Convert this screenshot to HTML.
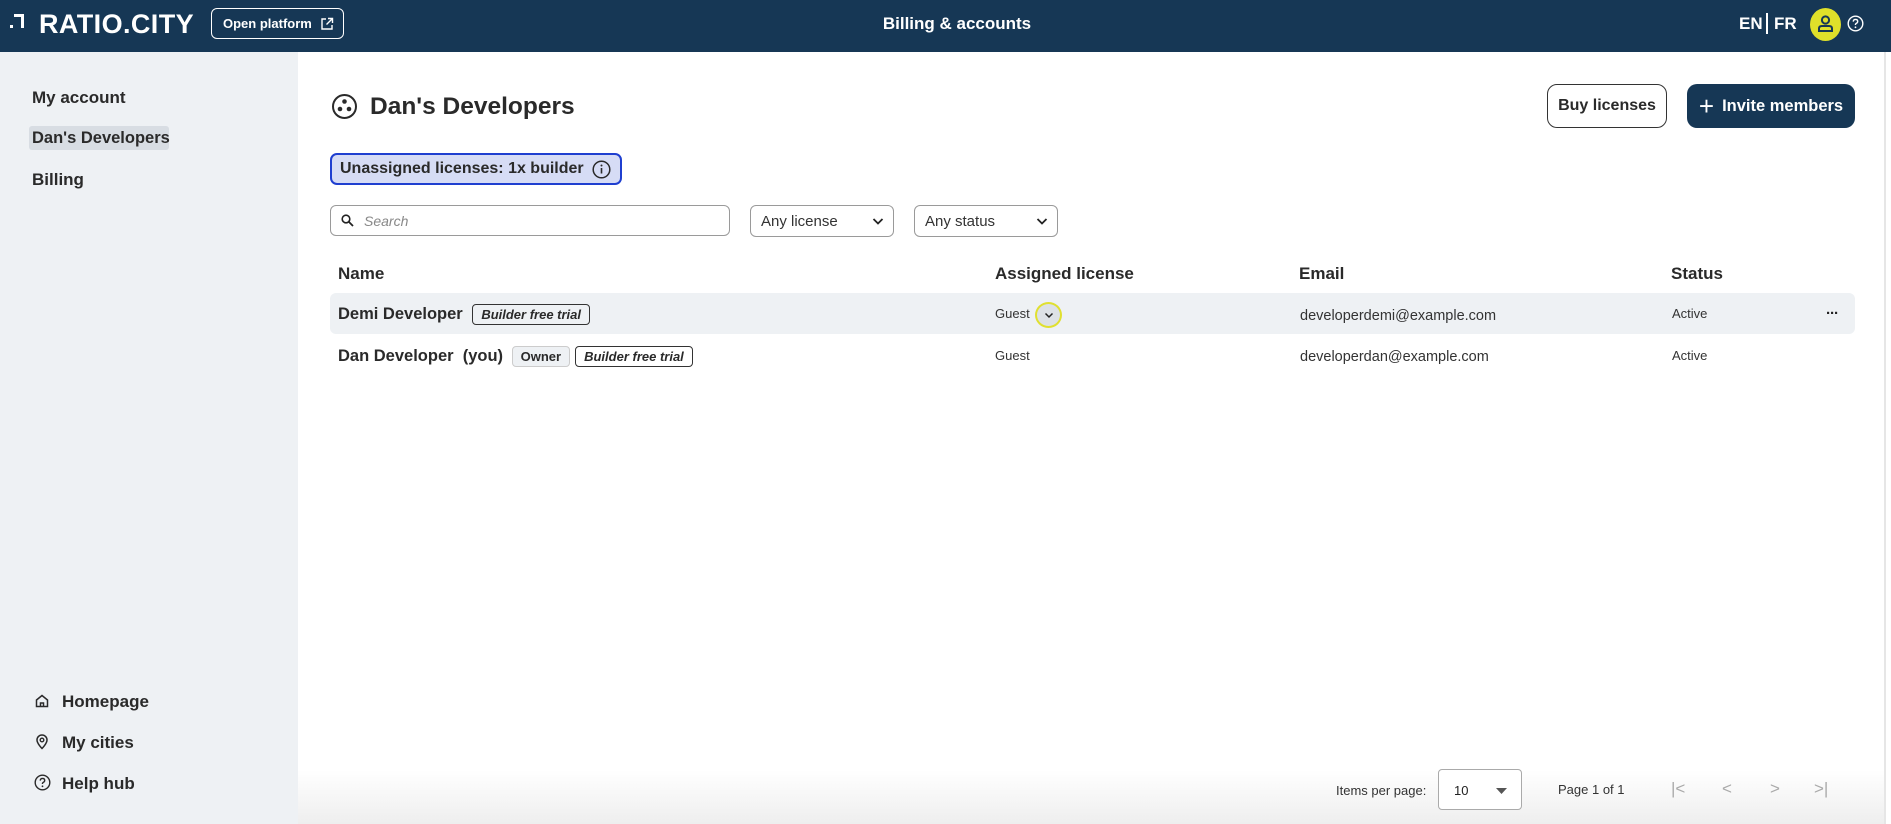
<!DOCTYPE html>
<html><head><meta charset="utf-8"><style>
*{box-sizing:border-box;margin:0;padding:0}
body{width:1891px;height:824px;overflow:hidden;font-family:"Liberation Sans",sans-serif;color:#222;background:#fff;position:relative}
.abs{position:absolute}
.top{left:0;top:0;width:1891px;height:52px;background:#163755;color:#fff}
.side{left:0;top:52px;width:298px;height:772px;background:#eef1f4}
.nav{font-size:17px;font-weight:bold;color:#2a2a2a}
.btn{border-radius:10px;font-weight:bold;font-size:17px;display:flex;align-items:center;justify-content:center}
.sel{border:1px solid #9a9a9a;border-radius:6px;font-size:15px;display:flex;align-items:center;padding-left:10px;color:#333}
.th{top:263px;font-size:17px;font-weight:bold;color:#2a2a2a}
.tag{display:inline-block;border:1px solid #333;border-radius:4px;font-size:13px;font-style:italic;font-weight:bold;padding:2px 8px;vertical-align:middle;margin-left:5px}
.cell{font-size:13px;color:#333}
</style></head><body>
<div class="abs top">
  <div class="abs" style="left:10px;top:14px;width:14px;height:14px"><div class="abs" style="left:0;top:11px;width:3px;height:3px;background:#fff"></div><div class="abs" style="left:4px;top:0;width:10px;height:14px;border-top:3px solid #fff;border-right:3px solid #fff"></div></div>
  <div class="abs" style="left:39px;top:9px;font-size:27px;font-weight:bold;letter-spacing:0.4px">RATIO.CITY</div>
  <div class="abs" style="left:211px;top:8px;width:133px;height:31px;border:1px solid #fff;border-radius:6px;font-size:13px;font-weight:bold;display:flex;align-items:center;padding-left:11px">Open platform
    <svg width="14" height="14" viewBox="0 0 14 14" style="margin-left:8px"><path d="M6 2H2v10h10V8M8 1.5h4.5V6M12.5 1.5L6.5 7.5" fill="none" stroke="#fff" stroke-width="1.4"/></svg></div>
  <div class="abs" style="left:857px;width:200px;top:14px;text-align:center;font-size:17px;font-weight:bold">Billing &amp; accounts</div>
  <div class="abs" style="left:1739px;top:14px;font-size:17px;font-weight:bold">EN</div>
  <div class="abs" style="left:1766px;top:13px;width:2px;height:21px;background:#fff"></div>
  <div class="abs" style="left:1774px;top:14px;font-size:17px;font-weight:bold">FR</div>
  <div class="abs" style="left:1810px;top:8px;width:31px;height:33px;border-radius:50%;background:#dfe02a">
    <svg width="31" height="33" viewBox="0 0 31 33"><circle cx="15.5" cy="12" r="3.6" fill="none" stroke="#163755" stroke-width="2"/><path d="M9 23v-2.5q0-2.5 3-2.5h7q3 0 3 2.5V23z" fill="none" stroke="#163755" stroke-width="2"/></svg></div>
  <svg class="abs" style="left:1847px;top:15px" width="17" height="17" viewBox="0 0 17 17"><circle cx="8.5" cy="8.5" r="7.3" fill="none" stroke="#fff" stroke-width="1.4"/><path d="M6.3 6.6q0-2.2 2.2-2.2t2.2 2q0 1.4-1.6 2.1-.7.4-.7 1.5" fill="none" stroke="#fff" stroke-width="1.4"/><circle cx="8.5" cy="12.3" r=".9" fill="#fff"/></svg>
</div>
<div class="abs side"></div>
<div class="abs nav" style="left:32px;top:88px">My account</div>
<div class="abs" style="left:29px;top:126px;width:140px;height:24px;background:#d8dde3;border-radius:3px"></div>
<div class="abs nav" style="left:32px;top:129px;font-size:16.5px">Dan's Developers</div>
<div class="abs nav" style="left:32px;top:170px">Billing</div>
<svg class="abs" style="left:34px;top:693px" width="16" height="16" viewBox="0 0 16 16"><path d="M2.5 7L8 2.5 13.5 7v6.5h-11z M6.5 13.5V10h3v3.5" fill="none" stroke="#2a2a2a" stroke-width="1.5"/></svg>
<div class="abs nav" style="left:62px;top:692px">Homepage</div>
<svg class="abs" style="left:34px;top:733px" width="16" height="17" viewBox="0 0 16 17"><path d="M8 15.5s-5-5-5-8.5a5 5 0 0 1 10 0c0 3.5-5 8.5-5 8.5z" fill="none" stroke="#2a2a2a" stroke-width="1.5"/><circle cx="8" cy="7" r="1.8" fill="none" stroke="#2a2a2a" stroke-width="1.4"/></svg>
<div class="abs nav" style="left:62px;top:733px">My cities</div>
<svg class="abs" style="left:34px;top:774px" width="17" height="17" viewBox="0 0 17 17"><circle cx="8.5" cy="8.5" r="7.3" fill="none" stroke="#2a2a2a" stroke-width="1.4"/><path d="M6.3 6.6q0-2.2 2.2-2.2t2.2 2q0 1.4-1.6 2.1-.7.4-.7 1.5" fill="none" stroke="#2a2a2a" stroke-width="1.4"/><circle cx="8.5" cy="12.3" r=".9" fill="#2a2a2a"/></svg>
<div class="abs nav" style="left:62px;top:774px">Help hub</div>

<svg class="abs" style="left:331px;top:93px" width="27" height="27" viewBox="0 0 27 27"><circle cx="13.5" cy="13.5" r="11.5" fill="none" stroke="#2a2a2a" stroke-width="2"/><circle cx="13.5" cy="8.5" r="2.3" fill="#2a2a2a"/><circle cx="9" cy="16" r="2.3" fill="#2a2a2a"/><circle cx="18" cy="16" r="2.3" fill="#2a2a2a"/></svg>
<div class="abs" style="left:370px;top:93px;font-size:24.5px;font-weight:bold;color:#2a2a2a">Dan's Developers</div>
<div class="abs btn" style="left:1547px;top:84px;width:120px;height:44px;border:1px solid #333;color:#2a2a2a;font-size:16px">Buy licenses</div>
<div class="abs btn" style="left:1687px;top:84px;width:168px;height:44px;background:#163755;color:#fff;font-size:16.5px"><span style="font-size:26px;font-weight:normal;margin-right:8px;line-height:1">+</span>Invite members</div>

<div class="abs" style="left:330px;top:153px;width:292px;height:32px;background:#d6dcf5;border:2px solid #1f3fd0;border-radius:7px;font-size:16px;font-weight:bold;display:flex;align-items:center;padding-left:8px;color:#2a2a2a">Unassigned licenses: 1x builder
  <svg width="19" height="19" viewBox="0 0 19 19" style="margin-left:8px"><circle cx="9.5" cy="9.5" r="8.3" fill="none" stroke="#2a2a2a" stroke-width="1.5"/><path d="M9.5 8v5.5" stroke="#2a2a2a" stroke-width="1.6"/><circle cx="9.5" cy="5.5" r="1" fill="#2a2a2a"/></svg></div>

<div class="abs sel" style="left:330px;top:205px;width:400px;height:31px;color:#888;font-style:italic;font-size:14px">
  <svg width="13" height="13" viewBox="0 0 13 13" style="margin-right:10px"><circle cx="5" cy="5" r="3.8" fill="none" stroke="#222" stroke-width="1.6"/><path d="M8 8l4 4" stroke="#222" stroke-width="1.8"/></svg>Search</div>
<div class="abs sel" style="left:750px;top:205px;width:144px;height:32px">Any license<svg class="abs" style="right:9px;top:11px" width="12" height="9" viewBox="0 0 12 9"><path d="M1.5 2l4.5 4.5L10.5 2" fill="none" stroke="#222" stroke-width="1.8"/></svg></div>
<div class="abs sel" style="left:914px;top:205px;width:144px;height:32px">Any status<svg class="abs" style="right:9px;top:11px" width="12" height="9" viewBox="0 0 12 9"><path d="M1.5 2l4.5 4.5L10.5 2" fill="none" stroke="#222" stroke-width="1.8"/></svg></div>

<div class="abs th" style="left:338px;top:264px">Name</div>
<div class="abs th" style="left:995px;top:264px">Assigned license</div>
<div class="abs th" style="left:1299px;top:264px">Email</div>
<div class="abs th" style="left:1671px;top:264px">Status</div>

<div class="abs" style="left:330px;top:293px;width:1525px;height:41px;background:#eef1f4;border-radius:6px"></div>
<div class="abs" style="left:338px;top:304px;font-size:16.5px;font-weight:bold;color:#2a2a2a">Demi Developer <span class="tag">Builder free trial</span></div>
<div class="abs cell" style="left:995px;top:306px">Guest</div>
<div class="abs" style="left:1035px;top:302px;width:27px;height:26px;border:2px solid #e0e030;border-radius:50%;background:#dde1e6"><svg class="abs" style="left:7px;top:8px" width="10" height="7" viewBox="0 0 10 7"><path d="M1.5 1.5l3.5 3.5 3.5-3.5" fill="none" stroke="#222" stroke-width="1.5"/></svg></div>
<div class="abs" style="left:1300px;top:308px;font-size:14.5px;color:#333">developerdemi@example.com</div>
<div class="abs cell" style="left:1672px;top:306px">Active</div>
<div class="abs" style="left:1826px;top:305px;font-size:15px;font-weight:bold;letter-spacing:-1px">···</div>

<div class="abs" style="left:338px;top:346px;font-size:16.5px;font-weight:bold;color:#2a2a2a">Dan Developer&nbsp; (you) <span class="tag" style="font-style:normal;background:#eef1f4;border-color:#ccc;margin-left:4px">Owner</span><span class="tag">Builder free trial</span></div>
<div class="abs cell" style="left:995px;top:348px">Guest</div>
<div class="abs" style="left:1300px;top:349px;font-size:14.5px;color:#333">developerdan@example.com</div>
<div class="abs cell" style="left:1672px;top:348px">Active</div>

<div class="abs" style="left:298px;top:770px;width:1587px;height:54px;background:linear-gradient(#fff,#eee)"></div>
<div class="abs" style="left:1884px;top:52px;width:2px;height:772px;background:#e6e6e6"></div>
<div class="abs" style="left:1336px;top:783px;font-size:13px;color:#333">Items per page:</div>
<div class="abs" style="left:1438px;top:769px;width:84px;height:41px;border:1px solid #aaa;border-radius:4px;background:#fff;font-size:13px;padding:13px 0 0 15px">10<svg class="abs" style="left:57px;top:18px" width="11" height="6"><path d="M0 0h11L5.5 6z" fill="#555"/></svg></div>
<div class="abs" style="left:1558px;top:782px;font-size:13px;color:#333">Page 1 of 1</div>
<div class="abs" style="left:1671px;top:779px;font-size:17px;color:#aaa;letter-spacing:0">|&lt;</div>
<div class="abs" style="left:1722px;top:779px;font-size:17px;color:#aaa">&lt;</div>
<div class="abs" style="left:1770px;top:779px;font-size:17px;color:#aaa">&gt;</div>
<div class="abs" style="left:1814px;top:779px;font-size:17px;color:#aaa">&gt;|</div>
</body></html>
